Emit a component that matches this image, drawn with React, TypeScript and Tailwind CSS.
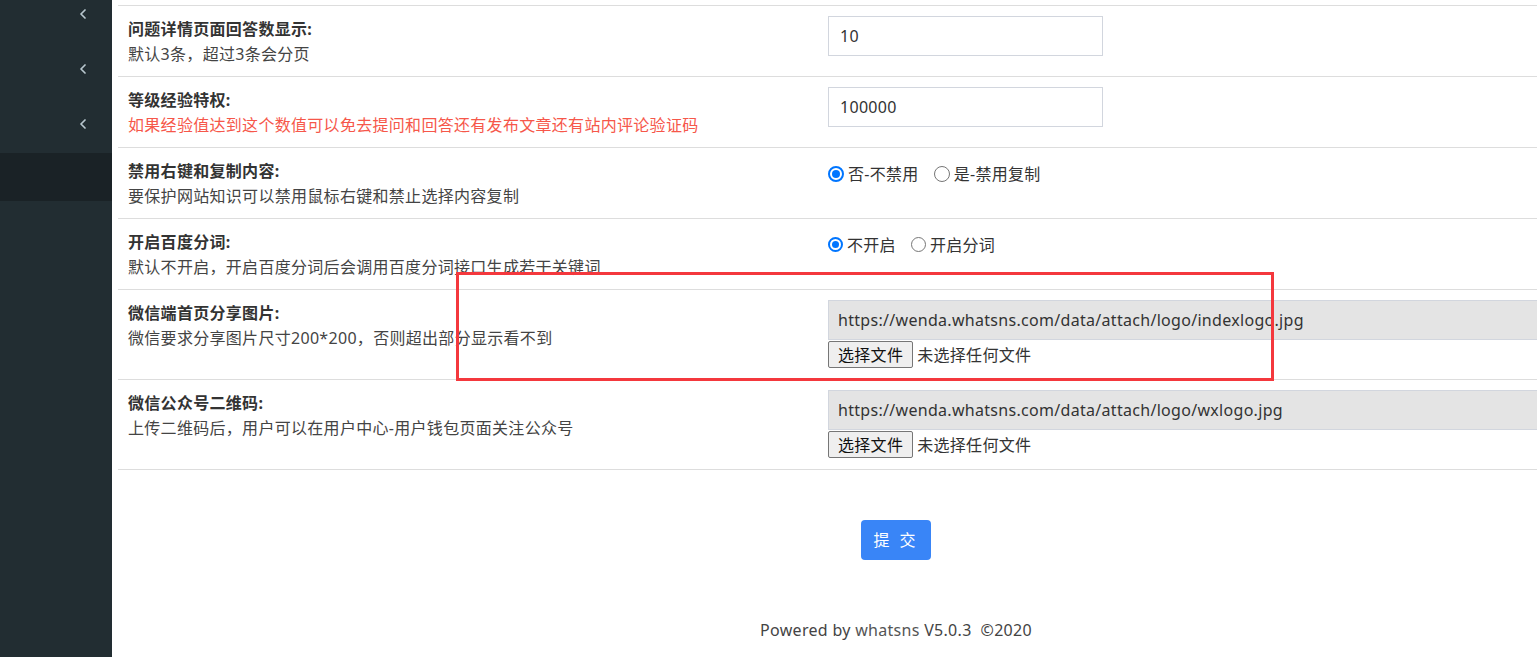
import React from "react";

function Chevron() {
  return (
    <svg width="8" height="10" viewBox="0 0 8 10" className="block">
      <polyline points="6,1 2,5 6,9" fill="none" stroke="#b8c7ce" strokeWidth="1.7" strokeLinecap="round" strokeLinejoin="round" />
    </svg>
  );
}

function Radio({ checked, size }: { checked: boolean; size: "lg" | "sm" }) {
  const dim = size === "lg" ? "w-[16px] h-[16px]" : "w-[15px] h-[15px]";
  if (checked) {
    return (
      <span className={`${dim} shrink-0 rounded-full border-[2px] border-[#0075ff] bg-white flex items-center justify-center`}>
        <span className={size === "lg" ? "w-[8px] h-[8px] rounded-full bg-[#0075ff]" : "w-[7px] h-[7px] rounded-full bg-[#0075ff]"} />
      </span>
    );
  }
  return <span className={`${dim} block shrink-0 rounded-full border border-[#767676] bg-white`} />;
}

function Label({ title, desc, red }: { title: string; desc: string; red?: boolean }) {
  return (
    <div className="w-[700px] shrink-0 pl-[10px] pt-[11px]">
      <div className="text-[16px] leading-[25px] font-bold text-[#333]">{title}</div>
      <div className={`text-[16px] leading-[25px] ${red ? "text-[#f6574a]" : "text-[#444]"}`}>{desc}</div>
    </div>
  );
}

function FileField({ url }: { url: string }) {
  return (
    <div className="flex-1 pl-[10px] pt-[10px]">
      <div className="h-[40px] border border-[#d2d6de] bg-[#e4e4e4] pl-[9px] flex items-center text-[16px] text-[#333]">
        {url}
      </div>
      <div className="mt-[1px] flex items-center">
        <span className="h-[27px] px-[9px] flex items-center border border-[#767676] rounded-[2px] bg-[#efefef] text-[16px] text-[#111]">
          选择文件
        </span>
        <span className="ml-[4px] text-[16px] text-[#333]">未选择任何文件</span>
      </div>
    </div>
  );
}

export default function App() {
  return (
    <div className="relative flex h-[657px] w-[1537px] overflow-hidden bg-white tracking-[0.3px] font-['Noto_Sans','Noto_Sans_CJK_SC',sans-serif]">
      <aside className="w-[112px] shrink-0 bg-[#222d32] flex flex-col">
        <div className="mt-[-14px] h-[55px] flex items-center justify-end pr-[25px]">
          <Chevron />
        </div>
        <div className="h-[55px] flex items-center justify-end pr-[25px]">
          <Chevron />
        </div>
        <div className="h-[55px] flex items-center justify-end pr-[25px]">
          <Chevron />
        </div>
        <div className="mt-[2px] h-[48px] bg-[#1a2226]" />
      </aside>

      <main className="flex-1 overflow-hidden pl-[6px] pt-[5px]">
        <div className="w-[1556px]">
          <div className="border-b border-[#ddd]">
            <div className="h-[71px] border-t border-[#ddd] flex">
              <Label title="问题详情页面回答数显示:" desc="默认3条，超过3条会分页" />
              <div className="flex-1 pl-[10px] pt-[10px]">
                <div className="w-[275px] h-[40px] border border-[#d2d6de] pl-[11px] flex items-center text-[16px] text-[#333]">10</div>
              </div>
            </div>
            <div className="h-[71px] border-t border-[#ddd] flex">
              <Label title="等级经验特权:" desc="如果经验值达到这个数值可以免去提问和回答还有发布文章还有站内评论验证码" red />
              <div className="flex-1 pl-[10px] pt-[10px]">
                <div className="w-[275px] h-[40px] border border-[#d2d6de] pl-[11px] flex items-center text-[16px] text-[#333]">100000</div>
              </div>
            </div>
            <div className="h-[71px] border-t border-[#ddd] flex">
              <Label title="禁用右键和复制内容:" desc="要保护网站知识可以禁用鼠标右键和禁止选择内容复制" />
              <div className="flex-1 pl-[10px] pt-[13px]">
                <div className="h-[25px] flex items-center text-[16px] text-[#333]">
                  <Radio checked size="lg" />
                  <span className="ml-[4px]">否-不禁用</span>
                  <span className="ml-[15px] flex"><Radio checked={false} size="lg" /></span>
                  <span className="ml-[4px]">是-禁用复制</span>
                </div>
              </div>
            </div>
            <div className="h-[71px] border-t border-[#ddd] flex">
              <Label title="开启百度分词:" desc="默认不开启，开启百度分词后会调用百度分词接口生成若干关键词" />
              <div className="flex-1 pl-[10px] pt-[13px]">
                <div className="h-[25px] flex items-center text-[16px] text-[#333]">
                  <Radio checked size="sm" />
                  <span className="ml-[4px]">不开启</span>
                  <span className="ml-[15px] flex"><Radio checked={false} size="sm" /></span>
                  <span className="ml-[4px]">开启分词</span>
                </div>
              </div>
            </div>
            <div className="h-[90px] border-t border-[#ddd] flex">
              <Label title="微信端首页分享图片:" desc="微信要求分享图片尺寸200*200，否则超出部分显示看不到" />
              <FileField url="https://wenda.whatsns.com/data/attach/logo/indexlogo.jpg" />
            </div>
            <div className="h-[90px] border-t border-[#ddd] flex">
              <Label title="微信公众号二维码:" desc="上传二维码后，用户可以在用户中心-用户钱包页面关注公众号" />
              <FileField url="https://wenda.whatsns.com/data/attach/logo/wxlogo.jpg" />
            </div>
          </div>

          <div className="mt-[50px] flex justify-center">
            <button className="w-[70px] h-[40px] rounded-[4px] bg-[#3985f7] text-white text-[16px] tracking-[3px]">
              提 交
            </button>
          </div>

          <div className="mt-[58px] text-center text-[16px] leading-[24px] text-[#444]">
            Powered by <span className="text-[#555]">whatsns</span> V5.0.3&nbsp;&nbsp;©2020
          </div>
        </div>
      </main>

      <div className="absolute left-[456px] top-[272px] w-[818px] h-[109px] border-[3px] border-[#f4383d] pointer-events-none" />
    </div>
  );
}
